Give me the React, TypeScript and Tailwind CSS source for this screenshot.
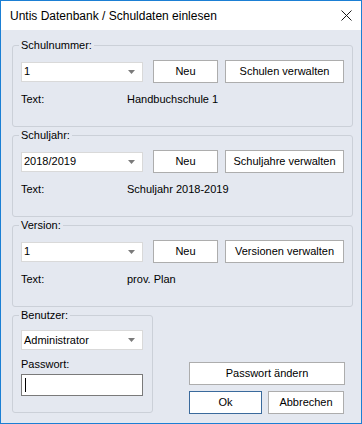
import React from "react"

const font = { fontFamily: '"Liberation Sans", Arial, sans-serif' }

const Combo = ({ value, w = "w-[122px]" }: { value: string; w?: string }) => (
  <div className={`${w} h-[20px] bg-white border border-[#d9d9d9] flex items-center pl-[2px] pr-[7px]`}>
    <span className="flex-1 leading-none">{value}</span>
    <svg width="7" height="4" viewBox="0 0 7 4">
      <path d="M0 0 H7 L3.5 4 Z" fill="#7a7a7a" />
    </svg>
  </div>
)

const Button = ({ label, w, primary = false }: { label: string; w: string; primary?: boolean }) => (
  <div
    className={`${w} h-[23px] bg-white border flex items-center justify-center ${
      primary ? "border-[#3a6a9c]" : "border-[#adadad]"
    }`}
  >
    {label}
  </div>
)

const Group = ({
  title,
  value,
  text,
  manage,
}: {
  title: string
  value: string
  text: string
  manage: string
}) => (
  <fieldset className="border border-[#cbd0d8] rounded-[3px] w-full">
    <legend className="ml-[6px] px-[2px] h-[16px] leading-[16px]">{title}</legend>
    <div className="px-[8px] pt-[7px] pb-[19px]">
      {/* combo + buttons */}
      <div className="flex items-center">
        <Combo value={value} />
        <div className="ml-[10px]">
          <Button label="Neu" w="w-[65px]" />
        </div>
        <div className="ml-[7px]">
          <Button label={manage} w="w-[119px]" />
        </div>
      </div>
      <div className="flex mt-[8px] h-[16px] leading-[16px]">
        <span className="w-[106px]">Text:</span>
        <span>{text}</span>
      </div>
    </div>
  </fieldset>
)

export default function App() {
  return (
    <div
      className="w-[362px] h-[424px] border border-[#1b7fd4] flex flex-col text-[11px] text-black bg-[#e4e8f0]"
      style={font}
    >
      {/* Title bar */}
      <div className="h-[29px] bg-white flex items-center pl-[9px] pr-[9px] shrink-0">
        <span className="flex-1 text-[12px]">Untis Datenbank / Schuldaten einlesen</span>
        <svg width="11" height="11" viewBox="0 0 11 11">
          <path d="M0.5 0.5 L10.5 10.5 M10.5 0.5 L0.5 10.5" stroke="#1a1a1a" strokeWidth="1" />
        </svg>
      </div>

      {/* Body */}
      <div className="flex-1 pl-[11px] pr-[8px] pt-[7px] flex flex-col">
        <Group title="Schulnummer:" value="1" text="Handbuchschule 1" manage="Schulen verwalten" />
        <Group title="Schuljahr:" value="2018/2019" text="Schuljahr 2018-2019" manage="Schuljahre verwalten" />
        <Group title="Version:" value="1" text="prov. Plan" manage="Versionen verwalten" />

        <div className="flex items-end">
          <fieldset className="border border-[#cbd0d8] rounded-[3px] w-[141px]">
            <legend className="ml-[6px] px-[2px] h-[16px] leading-[16px]">Benutzer:</legend>
            <div className="px-[8px] pt-[7px] pb-[16px]">
              <Combo value="Administrator" />
              <div className="mt-[6px] h-[16px] leading-[16px]">Passwort:</div>
              <div className="mt-[2px] w-[122px] h-[22px] bg-white border border-[#7a7a7a] flex items-center pl-[3px]">
                <div className="w-px h-[14px] bg-black" />
              </div>
            </div>
          </fieldset>

          <div className="ml-[36px] flex flex-col mb-[-1px]">
            <Button label="Passwort ändern" w="w-[156px]" />
            <div className="flex mt-[6px]">
              <Button label="Ok" w="w-[73px]" primary />
              <div className="ml-[6px]">
                <Button label="Abbrechen" w="w-[76px]" />
              </div>
            </div>
          </div>
        </div>
      </div>
    </div>
  )
}
